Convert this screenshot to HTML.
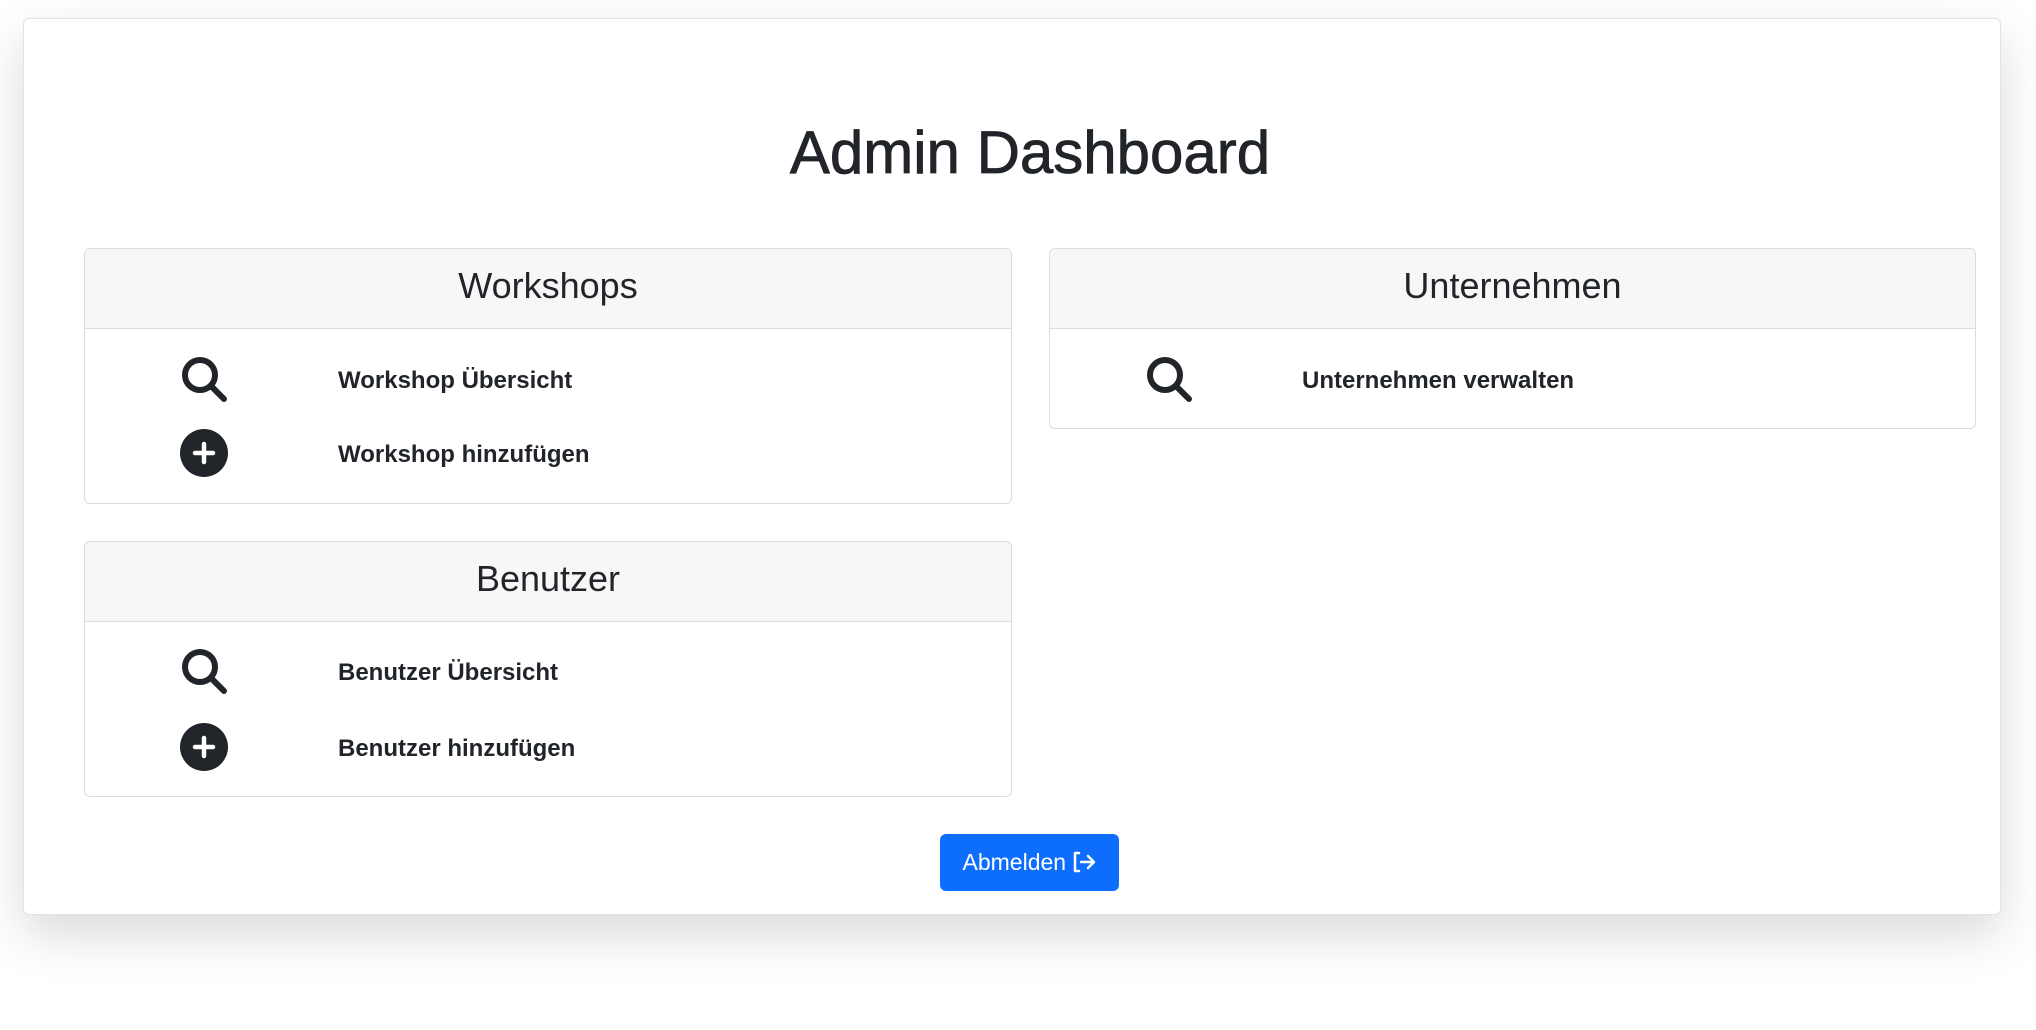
<!DOCTYPE html>
<html><head><meta charset="utf-8"><style>
*{box-sizing:border-box;margin:0;padding:0}
body{width:2036px;height:1030px;background:#fff;font-family:"Liberation Sans",sans-serif;color:#212529;position:relative;overflow:hidden}
.outer{position:absolute;left:23px;top:18px;width:1978px;height:897px;background:#fff;border:1px solid #e2e2e2;border-radius:6px;box-shadow:0 20px 50px rgba(0,0,0,.15)}
h1{position:absolute;left:0;width:2060px;top:113px;text-align:center;font-size:60px;font-weight:400;line-height:80px;-webkit-text-stroke:0.8px #212529}
.card{position:absolute;border:1px solid #dcdcdc;border-radius:6px;background:#fff;overflow:hidden}
.hd{height:80px;background:#f7f7f7;border-bottom:1px solid #dcdcdc;text-align:center;font-size:36px;line-height:74px}
.row{position:absolute;height:50px;font-weight:700;font-size:24px;line-height:50px}
.row svg{position:absolute;top:-1px}
.row span{position:absolute;white-space:nowrap}
.btn{position:absolute;left:940px;top:834px;width:179px;height:57px;background:#0d6efd;border-radius:6px;color:#fff;font-size:23px;line-height:57px;text-align:center}
</style></head><body>
<div class="outer"></div>
<h1>Admin Dashboard</h1>

<div class="card" style="left:84px;top:248px;width:928px;height:256px"><div class="hd">Workshops</div></div>
<div class="card" style="left:84px;top:541px;width:928px;height:256px"><div class="hd">Benutzer</div></div>
<div class="card" style="left:1049px;top:248px;width:927px;height:181px"><div class="hd">Unternehmen</div></div>

<svg width="0" height="0" style="position:absolute"><defs>
<symbol id="s" viewBox="0 0 48 48"><circle cx="20" cy="20" r="15" fill="none" stroke="#212529" stroke-width="6"/><line x1="31" y1="31" x2="44" y2="44" stroke="#212529" stroke-width="6" stroke-linecap="round"/></symbol>
<symbol id="p" viewBox="0 0 48 48"><circle cx="24" cy="24" r="24" fill="#212529"/><path d="M24 15v18M15 24h18" stroke="#fff" stroke-width="4.5" stroke-linecap="round"/></symbol>
</defs></svg>

<div class="row" style="left:0;top:356px;width:1000px"><svg style="left:180px" width="48" height="48"><use href="#s"/></svg><span style="left:338px">Workshop Übersicht</span></div>
<div class="row" style="left:0;top:430px;width:1000px"><svg style="left:180px" width="48" height="48"><use href="#p"/></svg><span style="left:338px">Workshop hinzufügen</span></div>
<div class="row" style="left:0;top:648px;width:1000px"><svg style="left:180px" width="48" height="48"><use href="#s"/></svg><span style="left:338px">Benutzer Übersicht</span></div>
<div class="row" style="left:0;top:724px;width:1000px"><svg style="left:180px" width="48" height="48"><use href="#p"/></svg><span style="left:338px">Benutzer hinzufügen</span></div>
<div class="row" style="left:0;top:356px;width:2000px"><svg style="left:1145px" width="48" height="48"><use href="#s"/></svg><span style="left:1302px">Unternehmen verwalten</span></div>

<div class="btn">Abmelden <svg width="24" height="22" viewBox="0 0 24 22" style="vertical-align:-3px"><path d="M7 2H3v18h4" fill="none" stroke="#fff" stroke-width="2.5" stroke-linecap="round" stroke-linejoin="round"/><path d="M9 11h12M16 5l6 6-6 6" fill="none" stroke="#fff" stroke-width="2.5" stroke-linecap="round" stroke-linejoin="round"/></svg></div>
</body></html>
